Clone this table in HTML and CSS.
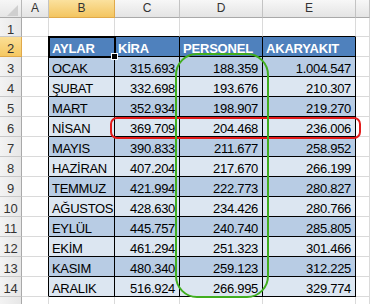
FILE: index.html
```html
<!DOCTYPE html>
<html lang="tr">
<head>
<meta charset="utf-8">
<link rel="stylesheet" href="styles.css">
</head>
<body>
<div class="sheet">
  <div class="grid">
    <!-- column headers -->
    <div class="corner"><svg width="21" height="17" viewBox="0 0 21 17"><polygon points="18,5 18,16 7,16" fill="#cfcfcf"/></svg></div>
    <div class="ch">A</div>
    <div class="ch hl">B</div>
    <div class="ch">C</div>
    <div class="ch">D</div>
    <div class="ch">E</div>
    <div class="ch last"></div>

    <!-- row 1 -->
    <div class="rh">1</div>
    <div class="c"></div>
    <div class="c above"></div>
    <div class="c above"></div>
    <div class="c above"></div>
    <div class="c above"></div>
    <div class="c"></div>

    <!-- row 2 -->
    <div class="rh hl">2</div>
    <div class="c edge"></div>
    <div class="c t th">AYLAR</div>
    <div class="c t th">KİRA</div>
    <div class="c t th">PERSONEL</div>
    <div class="c t th">AKARYAKIT</div>
    <div class="c"></div>

    <div class="rh">3</div><div class="c edge"></div>
    <div class="c t dk">OCAK</div><div class="c t dk num">315.693</div><div class="c t dk num">188.359</div><div class="c t dk num">1.004.547</div><div class="c"></div>

    <div class="rh">4</div><div class="c edge"></div>
    <div class="c t lt">ŞUBAT</div><div class="c t lt num">332.698</div><div class="c t lt num">193.676</div><div class="c t lt num">210.307</div><div class="c"></div>

    <div class="rh">5</div><div class="c edge"></div>
    <div class="c t dk">MART</div><div class="c t dk num">352.934</div><div class="c t dk num">198.907</div><div class="c t dk num">219.270</div><div class="c"></div>

    <div class="rh">6</div><div class="c edge"></div>
    <div class="c t lt">NİSAN</div><div class="c t lt num">369.709</div><div class="c t lt num">204.468</div><div class="c t lt num">236.006</div><div class="c"></div>

    <div class="rh">7</div><div class="c edge"></div>
    <div class="c t dk">MAYIS</div><div class="c t dk num">390.833</div><div class="c t dk num">211.677</div><div class="c t dk num">258.952</div><div class="c"></div>

    <div class="rh">8</div><div class="c edge"></div>
    <div class="c t lt">HAZİRAN</div><div class="c t lt num">407.204</div><div class="c t lt num">217.670</div><div class="c t lt num">266.199</div><div class="c"></div>

    <div class="rh">9</div><div class="c edge"></div>
    <div class="c t dk">TEMMUZ</div><div class="c t dk num">421.994</div><div class="c t dk num">222.773</div><div class="c t dk num">280.827</div><div class="c"></div>

    <div class="rh">10</div><div class="c edge"></div>
    <div class="c t lt">AĞUSTOS</div><div class="c t lt num">428.630</div><div class="c t lt num">234.426</div><div class="c t lt num">280.766</div><div class="c"></div>

    <div class="rh">11</div><div class="c edge"></div>
    <div class="c t dk">EYLÜL</div><div class="c t dk num">445.757</div><div class="c t dk num">240.740</div><div class="c t dk num">285.805</div><div class="c"></div>

    <div class="rh">12</div><div class="c edge"></div>
    <div class="c t lt">EKİM</div><div class="c t lt num">461.294</div><div class="c t lt num">251.323</div><div class="c t lt num">301.466</div><div class="c"></div>

    <div class="rh">13</div><div class="c edge"></div>
    <div class="c t dk">KASIM</div><div class="c t dk num">480.340</div><div class="c t dk num">259.123</div><div class="c t dk num">312.225</div><div class="c"></div>

    <div class="rh">14</div><div class="c edge"></div>
    <div class="c t lt">ARALIK</div><div class="c t lt num">516.924</div><div class="c t lt num">266.995</div><div class="c t lt num">329.774</div><div class="c"></div>

    <div class="rh"></div><div class="c"></div><div class="c"></div><div class="c"></div><div class="c"></div><div class="c"></div><div class="c"></div>
  </div>

  <div class="selbox"><span class="handle"></span></div>
  <div class="redbox"></div>
  <div class="greenbox"></div>
</div>
</body>
</html>
```

FILE: styles.css
```css
html, body {
  margin: 0;
  padding: 0;
  background: #ffffff;
  overflow: hidden;
}

.sheet {
  position: relative;
  width: 370px;
  height: 304px;
  overflow: hidden;
  font-family: "Liberation Sans", Arial, sans-serif;
  font-size: 13px;
  color: #000;
}

.grid {
  display: grid;
  grid-template-columns: 22px 27px 66px 65px 83px 93px 1fr;
  grid-template-rows: 18px 19px repeat(14, 20px);
}

.grid > div {
  box-sizing: border-box;
  white-space: nowrap;
  overflow: hidden;
}

.corner {
  background: linear-gradient(#f6f6f6, #e6e6e6);
  border-right: 1px solid #b8b8b8;
  border-bottom: 1px solid #a9a9a9;
}

.corner svg {
  display: block;
}

.ch {
  background: linear-gradient(#f7f7f7, #e4e4e4);
  border-right: 1px solid #c3c3c3;
  border-bottom: 1px solid #a9a9a9;
  text-align: center;
  font-size: 12px;
  line-height: 17px;
  color: #333;
}

.rh {
  background: linear-gradient(90deg, #f3f3f3, #e7e7e7);
  border-right: 1px solid #a9a9a9;
  border-bottom: 1px solid #c8c8c8;
  text-align: center;
  padding-top: 3px;
  line-height: 17px;
  color: #333;
  letter-spacing: -0.2px;
}

.ch.hl {
  background: linear-gradient(#fbe19e, #f3c560);
  border-right-color: #e0a94a;
  border-bottom-color: #e0a94a;
}

.rh.hl {
  background: linear-gradient(#fbdf96, #f5c862);
  border-right-color: #e0a94a;
  border-bottom-color: #e0a94a;
}

.c {
  border-right: 1px solid #dadada;
  border-bottom: 1px solid #dadada;
  padding: 3px 4px 0 3px;
  line-height: 17px;
  letter-spacing: -0.3px;
}

.c.edge {
  border-right-color: #000;
}

.c.above {
  border-bottom-color: #000;
}

.c.t {
  border-right-color: #000;
  border-bottom-color: #000;
}

.th {
  background: #4f81bd;
  color: #fff;
  font-weight: bold;
  letter-spacing: -0.2px;
}

.dk {
  background: #b8cce4;
}

.lt {
  background: #dce6f1;
}

.num {
  text-align: right;
}

.selbox {
  position: absolute;
  left: 48px;
  top: 36px;
  width: 68px;
  height: 22px;
  box-sizing: border-box;
  border: 2px solid #000;
}

.handle {
  position: absolute;
  right: -4px;
  bottom: -4px;
  width: 5px;
  height: 5px;
  background: #000;
  border: 1px solid #fff;
}

.redbox {
  position: absolute;
  left: 110px;
  top: 117px;
  width: 251px;
  height: 22px;
  box-sizing: border-box;
  border: 2px solid #e31b1b;
  border-radius: 7px;
}

.greenbox {
  position: absolute;
  left: 175px;
  top: 53px;
  width: 94px;
  height: 245px;
  box-sizing: border-box;
  border: 2px solid #41ae1f;
  border-radius: 22px;
}
```
